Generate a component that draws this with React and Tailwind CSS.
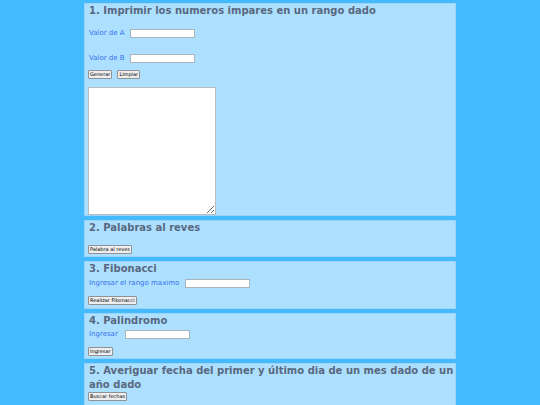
import React from 'react';

const font = { fontFamily: '"DejaVu Sans", Verdana, sans-serif' };

const Title = ({ children }) => (
  <h3 className="text-[10px] leading-[14px] font-bold text-[#58687f]">
    {children}
  </h3>
);

const Label = ({ children }) => (
  <span className="text-[7px] leading-[9px] text-[#3773f0]">{children}</span>
);

const Input = ({ className = '' }) => (
  <input type="text" className={`block h-[9px] w-[65px] bg-white border border-[#a9b4bd] ${className}`} />
);

const Btn = ({ children }) => (
  <button className="block -ml-[1px] h-[9px] px-[1px] bg-[#eeeeee] border border-[#8e9297] rounded-[1px] text-[5px] leading-[7px] text-black">
    {children}
  </button>
);

const Panel = ({ children, className = '' }) => (
  <section className={`bg-[#ade0ff] border border-[#9fd3f5] pl-[4px] pr-0 ${className}`}>{children}</section>
);

export default function App() {
  return (
    <div className="h-[405px] bg-[#44bbff] overflow-hidden" style={font}>
      <div className="w-[372px] mx-auto pt-[3px] flex flex-col gap-[4px]">
        <Panel className="h-[213px]">
          <Title>1. Imprimir los numeros impares en un rango dado</Title>
          <div className="flex items-center mt-[11px]">
            <Label>Valor de A</Label>
            <Input className="ml-[5px]" />
          </div>
          <div className="flex items-center mt-[16px]">
            <Label>Valor de B</Label>
            <Input className="ml-[5px]" />
          </div>
          <div className="flex gap-[6px] mt-[7px]">
            <Btn>Generar</Btn>
            <Btn>Limpiar</Btn>
          </div>
          <textarea className="block -ml-[1px] mt-[8px] w-[128px] h-[128px] bg-white border border-[#b4bcc4] resize" />
        </Panel>

        <Panel className="h-[37px]">
          <Title>2. Palabras al reves</Title>
          <div className="mt-[10px]">
            <Btn>Palabra al reves</Btn>
          </div>
        </Panel>

        <Panel className="h-[48px]">
          <Title>3. Fibonacci</Title>
          <div className="flex items-center mt-[3px]">
            <Label>Ingresar el rango maximo</Label>
            <Input className="ml-[6px]" />
          </div>
          <div className="mt-[8px]">
            <Btn>Realizar Fibonacci</Btn>
          </div>
        </Panel>

        <Panel className="h-[46px]">
          <Title>4. Palindromo</Title>
          <div className="flex items-center mt-[2px]">
            <Label>Ingresar</Label>
            <Input className="ml-[7px]" />
          </div>
          <div className="mt-[8px]">
            <Btn>Ingresar</Btn>
          </div>
        </Panel>

        <Panel className="h-[60px]">
          <Title>5. Averiguar fecha del primer y último dia de un mes dado de un año dado</Title>
          <div className="mt-[0px]">
            <Btn>Buscar fechas</Btn>
          </div>
        </Panel>
      </div>
    </div>
  );
}
